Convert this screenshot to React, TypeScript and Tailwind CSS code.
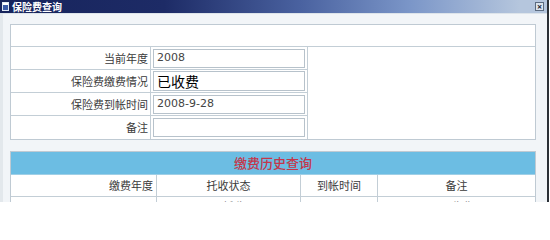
import React from "react";

const cjk = { fontFamily: '"Noto Sans CJK SC", "Noto Sans", sans-serif' };
const latin = { fontFamily: '"DejaVu Sans", "Noto Sans CJK SC", sans-serif' };

const fields = [
  { label: "当前年度", value: "2008", big: false },
  { label: "保险费缴费情况", value: "已收费", big: true },
  { label: "保险费到帐时间", value: "2008-9-28", big: false },
  { label: "备注", value: "", big: false },
];

const history = ["缴费年度", "托收状态", "到帐时间", "备注"];
const historyRow = ["2008", "已托收", "2008-9-28", "已收费"];

function TitleBar() {
  return (
    <div className="flex h-[13px] shrink-0 items-center overflow-hidden bg-[linear-gradient(90deg,#17245c_0%,#1d2b66_30%,#4a62a0_55%,#7b96c8_75%,#b5c6dd_95%)] pl-[2px] pr-[3px]">
      <div className="flex h-[9px] w-[7px] flex-col border border-[#dfe8f4] bg-[#3a5ba8]">
        <div className="h-[2px] bg-white" />
      </div>
      <span className="ml-[3px] text-[10px] leading-[13px] font-bold text-white" style={cjk}>
        保险费查询
      </span>
      <div className="ml-auto flex h-[9px] w-[9px] items-center justify-center border border-[#5b6b80] bg-[#dbe3ec] text-[9px] leading-none font-bold text-[#1a2333]">
        ×
      </div>
    </div>
  );
}

function QueryTable() {
  return (
    <div className="shrink-0 border border-[#bfcad3] bg-white">
      <div className="h-[22px] border-b border-[#c3ced6]" />
      <div className="grid grid-cols-[140px_157px_1fr] grid-rows-[repeat(4,23px)]">
        {fields.map((f, i) => (
          <React.Fragment key={f.label}>
            <div
              className={`flex items-center justify-end border-r border-[#c3ced6] pr-[2px] text-[11px] text-[#3a3a3a] ${i < 3 ? "border-b" : ""}`}
              style={{ ...cjk, gridRow: i + 1, gridColumn: 1 }}
            >
              {f.label}
            </div>
            <div
              className={`flex items-center border-r border-[#c3ced6] pl-[2px] pr-[2px] ${i < 3 ? "border-b" : ""}`}
              style={{ gridRow: i + 1, gridColumn: 2 }}
            >
              <div
                className={`flex w-full items-center border border-[#b7c2cb] bg-white pl-[3px] ${
                  f.big ? "h-[20px] text-[14px] text-black" : "h-[19px] text-[11px] text-[#444]"
                }`}
                style={f.big ? cjk : latin}
              >
                {f.value}
              </div>
            </div>
          </React.Fragment>
        ))}
        <div className="bg-white" style={{ gridRow: "1 / 5", gridColumn: 3 }} />
      </div>
    </div>
  );
}

function HistoryTable() {
  const cols = "grid grid-cols-[146px_144px_77px_1fr]";
  return (
    <div className="shrink-0 border-x border-t border-[#bfcad3] bg-white">
      <div
        className="flex h-[23px] items-center justify-center border-b border-[#9fcfe6] bg-[#6cbde3] text-[13px] font-medium text-[#c4364a]"
        style={cjk}
      >
        缴费历史查询
      </div>
      <div className={`${cols} h-[22px] border-b border-[#c3ced6]`}>
        {history.map((h, i) => (
          <div
            key={h}
            className={`flex items-center text-[11px] text-[#3a3a3a] ${i === 0 ? "justify-end pr-[3px]" : "justify-center"} ${i < 3 ? "border-r border-[#c3ced6]" : ""}`}
            style={cjk}
          >
            {h}
          </div>
        ))}
      </div>
      <div className={`${cols} h-[22px]`}>
        {historyRow.map((h, i) => (
          <div
            key={i}
            className={`flex items-start pt-[1px] text-[11px] leading-[16px] text-[#888] ${i === 0 ? "justify-end pr-[3px]" : "justify-center"} ${i < 3 ? "border-r border-[#c3ced6]" : ""}`}
            style={cjk}
          >
            {h}
          </div>
        ))}
      </div>
    </div>
  );
}

export default function App() {
  return (
    <div className="h-[202px] w-[550px] overflow-hidden bg-white">
      <div className="flex h-[202px] w-[549px] flex-col border-r-2 border-[#2b3036] bg-[#f2f5f8]">
        <TitleBar />
        <div className="h-px shrink-0 bg-[#dde4ea]" />
        <div className="flex min-h-0 flex-1 flex-col overflow-hidden border-l-[3px] border-[#e3e8ec] pt-[10px] pl-[7px] pr-[11px]">
          <QueryTable />
          <div className="h-[11px] shrink-0" />
          <HistoryTable />
        </div>
      </div>
    </div>
  );
}
